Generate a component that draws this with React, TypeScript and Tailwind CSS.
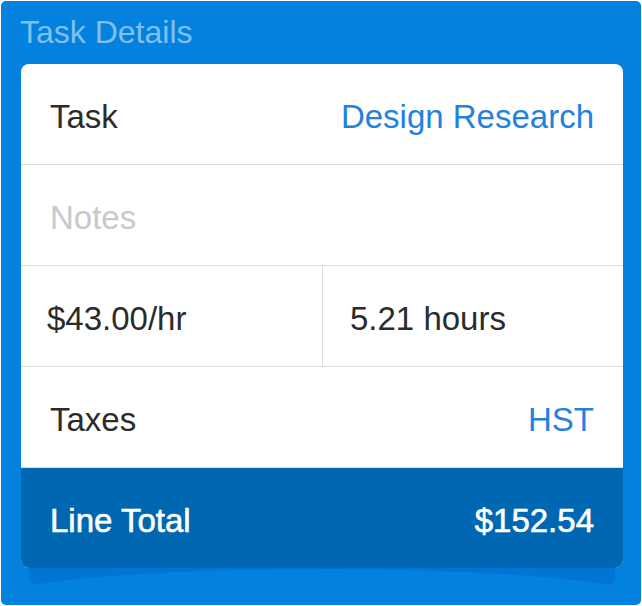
import React from "react";

const font = { fontFamily: '"Liberation Sans", Arial, Helvetica, sans-serif' };

function Row({ children, className = "" }: { children: React.ReactNode; className?: string }) {
  return (
    <div className={`flex h-[101px] items-center justify-between border-b border-[#dcdcdc] pl-[29px] pr-[29px] pt-[4px] ${className}`}>
      {children}
    </div>
  );
}

export default function App() {
  return (
    <div className="min-h-screen bg-white p-[1px]" style={font}>
      <div className="flex h-[604px] w-[640px] flex-col rounded-[5px] bg-[#0281df] pl-[20px] pr-[18px]">
        <div className="-ml-[1px] pt-[15px] pb-[16px] text-[32px] leading-[32px] text-[#80c0ef]">Task Details</div>
        <div className="relative">
          <svg
            className="absolute left-[8px] top-[494px]"
            width="586"
            height="27"
            viewBox="0 0 586 27"
          >
            <path
              d="M0 0 H586 V20 Q586 26.5 579 26.5 C450 5.8 136 5.8 7 26.5 Q0 26.5 0 20 Z"
              fill="#0175d3"
            />
          </svg>
          <div className="relative z-10 overflow-hidden rounded-[8px] bg-white text-[33px] leading-none">
            <Row>
              <span className="text-[#2b2b2b]">Task</span>
              <span className="text-[#2381de]">Design Research</span>
            </Row>
            <Row>
              <span className="text-[#c8c8cd]">Notes</span>
            </Row>
            <div className="grid h-[101px] grid-cols-[302px_1fr] border-b border-[#dcdcdc]">
              <div className="flex items-center border-r border-[#dcdcdc] pl-[26px] pt-[4px] text-[#2b2b2b]">$43.00/hr</div>
              <div className="flex items-center pl-[27px] pt-[4px] text-[#2b2b2b]">5.21 hours</div>
            </div>
            <Row>
              <span className="text-[#2b2b2b]">Taxes</span>
              <span className="text-[#2381de]">HST</span>
            </Row>
            <div className="flex h-[100px] items-center justify-between bg-[#0067b3] pl-[29px] pr-[29px] pt-[4px] text-white [-webkit-text-stroke:0.6px_white]">
              <span>Line Total</span>
              <span>$152.54</span>
            </div>
          </div>
        </div>
      </div>
    </div>
  );
}
